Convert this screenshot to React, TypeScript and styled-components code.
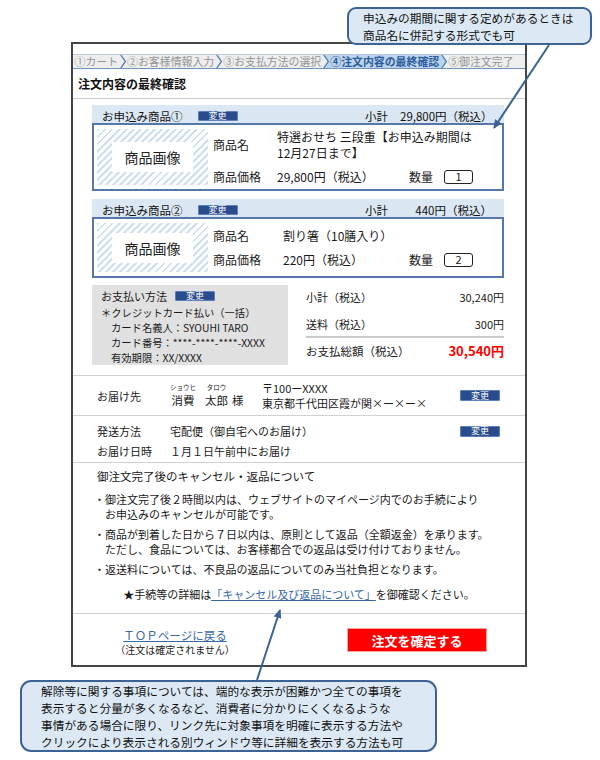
import React from 'react';
import styled, { createGlobalStyle } from 'styled-components';

const GlobalStyle = createGlobalStyle`
  html, body {
    margin: 0;
    padding: 0;
    background: #fff;
  }
  body {
    font-family: "Noto Sans CJK JP", "Noto Sans", sans-serif;
    color: #1a1a1a;
  }
  * {
    box-sizing: border-box;
  }
`;

interface Step {
    label: string,
    active?: boolean
}

const steps: Step[] = [
    { label: '①カート' },
    { label: '②お客様情報入力' },
    { label: '③お支払方法の選択' },
    { label: '④注文内容の最終確認', active: true },
    { label: '⑤御注文完了' }
];

interface Product {
    no: string,
    subtotal: string,
    name: React.ReactNode,
    price: string,
    qty: string,
    indent: number
}

const products: Product[] = [
    {
        no: '①',
        subtotal: '29,800円（税込）',
        name: <>特選おせち 三段重【お申込み期間は<br />12月27日まで】</>,
        price: '29,800円（税込）',
        qty: '1',
        indent: 64
    },
    {
        no: '②',
        subtotal: '440円（税込）',
        name: '割り箸（10膳入り）',
        price: '220円（税込）',
        qty: '2',
        indent: 70
    }
];

const STEP_BG = '#eeeeee';
const STEP_ACTIVE = '#bdd4ed';

const Chevron = ({ prev, next }: { prev?: boolean, next?: boolean }) => (
    <ChevronSvg viewBox="0 0 6 13" preserveAspectRatio="none">
        <polygon points="0,0 0.8,0 5.3,6.5 0.8,13 0,13" fill={prev ? STEP_ACTIVE : STEP_BG} />
        <polygon points="0.8,0 6,0 6,13 0.8,13 5.3,6.5" fill={next ? STEP_ACTIVE : STEP_BG} />
        <polyline points="0.8,0 5.3,6.5 0.8,13" fill="none" stroke="#4d7ab4" strokeWidth="1.3" />
    </ChevronSvg>
);

const App = () => {
    return (
        <Page>
            <GlobalStyle />
            <Frame>
                <Stepper>
                    {steps.map((s, i) => (
                        <React.Fragment key={s.label}>
                            {i > 0 && <Chevron prev={steps[i - 1].active} next={s.active} />}
                            <StepItem $active={s.active} $grow={i === steps.length - 1}>{s.label}</StepItem>
                        </React.Fragment>
                    ))}
                </Stepper>
                <PageTitle>注文内容の最終確認</PageTitle>

                <OrderArea>
                    {products.map((p) => (
                        <ProductBlock key={p.no}>
                            <ProductHeader>
                                <span>お申込み商品{p.no}</span>
                                <ChangeButton type="button">変更</ChangeButton>
                                <span />
                                <span>小計</span>
                                <Amount>{p.subtotal}</Amount>
                            </ProductHeader>
                            <ProductBox>
                                <ImageSlot>
                                    <ImageLabel>商品画像</ImageLabel>
                                </ImageSlot>
                                <Details>
                                    <DetailRow $indent={p.indent}>
                                        <span>商品名</span>
                                        <span>{p.name}</span>
                                    </DetailRow>
                                    <DetailRow $indent={p.indent}>
                                        <span>商品価格</span>
                                        <span>{p.price}</span>
                                        <span>数量</span>
                                        <QtyBox>{p.qty}</QtyBox>
                                    </DetailRow>
                                </Details>
                            </ProductBox>
                        </ProductBlock>
                    ))}

                    <PaymentRow>
                        <PaymentBox>
                            <PaymentTitle>
                                お支払い方法
                                <ChangeButton type="button">変更</ChangeButton>
                            </PaymentTitle>
                            <PaymentLine>＊クレジットカード払い（一括）</PaymentLine>
                            <PaymentLine $sub>カード名義人：SYOUHI TARO</PaymentLine>
                            <PaymentLine $sub>カード番号：****-****-****-XXXX</PaymentLine>
                            <PaymentLine $sub>有効期限：XX/XXXX</PaymentLine>
                        </PaymentBox>
                        <Summary>
                            <SumRow $top={5}>
                                <span>小計（税込）</span>
                                <span>30,240円</span>
                            </SumRow>
                            <SumRow $top={13} $rule>
                                <span>送料（税込）</span>
                                <span>300円</span>
                            </SumRow>
                            <SumRow $top={6} $total>
                                <span>お支払総額（税込）</span>
                                <TotalPrice>30,540円</TotalPrice>
                            </SumRow>
                        </Summary>
                    </PaymentRow>
                </OrderArea>

                <DeliverySection>
                    <span>お届け先</span>
                    <NameBlock>
                        <Furigana>
                            <Kana>ショウヒ</Kana>
                            <Kanji>消費</Kanji>
                        </Furigana>
                        <Furigana $gap={9}>
                            <Kana>タロウ</Kana>
                            <Kanji>太郎</Kanji>
                        </Furigana>
                        <Kanji $gap={4}>様</Kanji>
                    </NameBlock>
                    <Address>
                        〒100ーXXXX<br />
                        東京都千代田区霞が関×ー×ー×
                    </Address>
                    <ChangeButton type="button" $tall>変更</ChangeButton>
                </DeliverySection>

                <ShippingSection>
                    <span>発送方法</span>
                    <span>宅配便（御自宅へのお届け）</span>
                    <ChangeButton type="button" $tall>変更</ChangeButton>
                    <span>お届け日時</span>
                    <span>１月１日午前中にお届け</span>
                </ShippingSection>

                <CancelSection>
                    <CancelTitle>御注文完了後のキャンセル・返品について</CancelTitle>
                    <NoteList>
                        <Note>
                            <Bullet>・</Bullet>
                            <span>御注文完了後２時間以内は、ウェブサイトのマイページ内でのお手続により<br />お申込みのキャンセルが可能です。</span>
                        </Note>
                        <Note>
                            <Bullet>・</Bullet>
                            <span>商品が到着した日から７日以内は、原則として返品（全額返金）を承ります。<br />ただし、食品については、お客様都合での返品は受け付けておりません。</span>
                        </Note>
                        <Note>
                            <Bullet>・</Bullet>
                            <span>返送料については、不良品の返品についてのみ当社負担となります。</span>
                        </Note>
                    </NoteList>
                    <StarLine>
                        ★手続等の詳細は<TextLink href="#">「キャンセル及び返品について」</TextLink>を御確認ください。
                    </StarLine>
                </CancelSection>

                <ActionSection>
                    <BackBlock>
                        <TopLink href="#">ＴＯＰページに戻る</TopLink>
                        <BackNote>（注文は確定されません）</BackNote>
                    </BackBlock>
                    <ConfirmButton type="button">注文を確定する</ConfirmButton>
                </ActionSection>
            </Frame>

            <BottomCallout>
                解除等に関する事項については、端的な表示が困難かつ全ての事項を<br />
                表示すると分量が多くなるなど、消費者に分かりにくくなるような<br />
                事情がある場合に限り、リンク先に対象事項を明確に表示する方法や<br />
                クリックにより表示される別ウィンドウ等に詳細を表示する方法も可
            </BottomCallout>

            <TopCallout>
                申込みの期間に関する定めがあるときは<br />
                商品名に併記する形式でも可
            </TopCallout>

            <Arrows viewBox="0 0 600 760">
                <defs>
                    <marker id="head" markerWidth="9" markerHeight="8" refX="8" refY="4" orient="auto" markerUnits="userSpaceOnUse">
                        <path d="M0,0 L9,4 L0,8 z" fill="#3b6394" />
                    </marker>
                </defs>
                <line x1="549" y1="45" x2="494" y2="128" stroke="#3b6394" strokeWidth="2" markerEnd="url(#head)" />
                <line x1="257" y1="680" x2="280" y2="610" stroke="#3b6394" strokeWidth="2" markerEnd="url(#head)" />
            </Arrows>
        </Page>
    );
};

export default App;

const Page = styled.div`
    position: relative;
    width: 600px;
    height: 760px;
    padding-top: 42px;
    overflow: hidden;
    background: #fff;
`;

const Frame = styled.div`
    margin-left: 71px;
    width: 456px;
    border: 2px solid #454545;
    background: #fff;
    font-size: 11px;
    line-height: 14px;
`;

const Stepper = styled.div`
    display: flex;
    height: 15px;
    margin-top: 10px;
    background: ${STEP_BG};
    border-top: 1px solid #b9c9dc;
    border-bottom: 1px solid #7094c0;
    overflow: hidden;
`;

const StepItem = styled.span<{ $active?: boolean, $grow?: boolean }>`
    flex: ${p => p.$grow ? 1 : 'none'};
    padding: 0 1.5px;
    font-size: 10.9px;
    line-height: 13px;
    white-space: nowrap;
    color: ${p => p.$active ? '#2c5d9c' : '#959595'};
    font-weight: ${p => p.$active ? 700 : 400};
    background: ${p => p.$active ? STEP_ACTIVE : 'transparent'};
`;

const ChevronSvg = styled.svg`
    display: block;
    flex: none;
    width: 6px;
    height: 13px;
`;

const PageTitle = styled.div`
    height: 30px;
    padding-left: 5px;
    border-bottom: 1px solid #c8c8c8;
    font-size: 12px;
    font-weight: 700;
    line-height: 29px;
    color: #111;
`;

const OrderArea = styled.div`
    display: flex;
    flex-direction: column;
    gap: 8px;
    padding: 6px 21px 10px 19px;
`;

const ProductBlock = styled.div`
    display: flex;
    flex-direction: column;
`;

const ProductHeader = styled.div`
    display: grid;
    grid-template-columns: auto 40px 1fr 35px 92px;
    align-items: center;
    height: 18px;
    padding: 3px 12px 0 10px;
    background: #dbe7f2;
    font-size: 11.5px;
    line-height: 14px;
    color: #111;

    & > button {
        margin-left: 15px;
    }
`;

const Amount = styled.span`
    text-align: right;
`;

const ChangeButton = styled.button<{ $tall?: boolean }>`
    width: 40px;
    height: ${p => p.$tall ? 11 : 10}px;
    padding: 0;
    border: 1px solid #5d7fb8;
    border-radius: 1px;
    background: #2b4c8c;
    color: #fff;
    font-family: inherit;
    font-size: 9px;
    line-height: 8px;
    cursor: pointer;
`;

const ProductBox = styled.div`
    display: flex;
    padding: 4px 3px;
    border: 2px solid #5677a9;
    background: #fff;
`;

const ImageSlot = styled.div`
    flex: none;
    width: 111px;
    min-height: 49px;
    display: flex;
    align-items: center;
    justify-content: center;
    background: repeating-linear-gradient(135deg, #cddff1 0 2px, #fff 2px 5px);
`;

const ImageLabel = styled.div`
    width: 81px;
    height: 30px;
    background: #fff;
    font-size: 14px;
    line-height: 30px;
    text-align: center;
    color: #222;
`;

const Details = styled.div`
    flex: 1;
    display: flex;
    flex-direction: column;
    justify-content: center;
    gap: 8px;
    padding-left: 5px;
`;

const DetailRow = styled.div<{ $indent: number }>`
    display: grid;
    grid-template-columns: ${p => p.$indent}px 1fr auto auto;
    align-items: center;
    font-size: 12px;
    line-height: 16px;
    color: #1a1a1a;
`;

const QtyBox = styled.span`
    width: 29px;
    height: 14px;
    margin: 0 26px 0 11px;
    border: 1.5px solid #222;
    border-radius: 3px;
    font-size: 11px;
    line-height: 11px;
    text-align: center;
`;

const PaymentRow = styled.div`
    display: flex;
    gap: 18px;
    margin-top: -1px;
`;

const PaymentBox = styled.div`
    width: 196px;
    height: 80px;
    padding: 4px 0 0 9px;
    background: #e1e1e1;
    color: #1a1a1a;
`;

const PaymentTitle = styled.div`
    display: flex;
    align-items: center;
    gap: 8px;
    height: 14px;
    margin-bottom: 2px;
    font-size: 11px;
`;

const PaymentLine = styled.div<{ $sub?: boolean }>`
    padding-left: ${p => p.$sub ? 10 : 0}px;
    font-size: 10.3px;
    line-height: 15px;
    white-space: nowrap;
`;

const Summary = styled.div`
    flex: 1;
    display: flex;
    flex-direction: column;
`;

const SumRow = styled.div<{ $top: number, $rule?: boolean, $total?: boolean }>`
    display: flex;
    justify-content: space-between;
    align-items: center;
    margin-top: ${p => p.$top}px;
    padding-bottom: ${p => p.$rule ? 5 : 0}px;
    border-bottom: ${p => p.$rule ? '2px solid #cacaca' : 'none'};
    font-size: ${p => p.$total ? 11.5 : 11}px;
    line-height: 14px;
`;

const TotalPrice = styled.span`
    color: #ff0000;
    font-size: 13px;
    font-weight: 700;
`;

const DeliverySection = styled.div`
    display: grid;
    grid-template-columns: 73px 92px 1fr auto;
    align-items: center;
    height: 40px;
    padding: 0 25px 0 24px;
    border-top: 1px solid #d2d2d2;
`;

const NameBlock = styled.span`
    display: flex;
    align-items: flex-end;
`;

const Furigana = styled.span<{ $gap?: number }>`
    display: flex;
    flex-direction: column;
    align-items: center;
    margin-left: ${p => p.$gap || 0}px;
`;

const Kana = styled.span`
    font-size: 6.5px;
    line-height: 9px;
    white-space: nowrap;
`;

const Kanji = styled.span<{ $gap?: number }>`
    margin-left: ${p => p.$gap || 0}px;
    font-size: 11.5px;
    line-height: 16px;
`;

const Address = styled.span`
    line-height: 15px;
`;

const ShippingSection = styled.div`
    display: grid;
    grid-template-columns: 73px 1fr auto;
    grid-auto-rows: 14px;
    align-items: center;
    row-gap: 6px;
    height: 47px;
    padding: 8px 25px 0 24px;
    border-top: 1px solid #d2d2d2;
`;

const CancelSection = styled.div`
    height: 151px;
    padding: 6px 0 0 0;
    border-top: 1px solid #d2d2d2;
`;

const CancelTitle = styled.div`
    padding-left: 24px;
    font-size: 11.5px;
    line-height: 14px;
`;

const NoteList = styled.div`
    display: flex;
    flex-direction: column;
    gap: 5px;
    margin-top: 9px;
    padding-left: 21px;
`;

const Note = styled.div`
    display: flex;
    line-height: 15px;
`;

const Bullet = styled.span`
    flex: none;
    width: 11px;
`;

const StarLine = styled.div`
    margin-top: 10px;
    text-align: center;
    line-height: 15px;
`;

const TextLink = styled.a`
    color: #3867a6;
    text-decoration: underline;
`;

const ActionSection = styled.div`
    display: flex;
    align-items: center;
    height: 52px;
    border-top: 1px solid #d2d2d2;
`;

const BackBlock = styled.div`
    display: flex;
    flex-direction: column;
    align-items: center;
    width: 204px;
    padding-top: 5px;
`;

const TopLink = styled.a`
    color: #3a69a6;
    font-size: 11.5px;
    line-height: 15px;
    text-decoration: underline;
`;

const BackNote = styled.span`
    font-size: 10px;
    line-height: 14px;
    color: #222;
`;

const ConfirmButton = styled.button`
    width: 140px;
    height: 24px;
    margin-left: 70px;
    margin-top: 1px;
    padding: 0;
    border: 1px solid #f3a3a3;
    background: #ff0000;
    color: #fff;
    font-family: inherit;
    font-size: 13px;
    font-weight: 700;
    cursor: pointer;
`;

const Callout = styled.div`
    border: 2px solid #3d6394;
    border-radius: 9px;
    background: #dce9f5;
    color: #111;
    font-size: 11.7px;
    line-height: 17px;
    white-space: nowrap;
`;

const TopCallout = styled(Callout)`
    position: absolute;
    left: 347px;
    top: 7px;
    width: 245px;
    height: 38px;
    padding: 0 0 0 14px;
`;

const BottomCallout = styled(Callout)`
    width: 417px;
    height: 72px;
    margin: 13px 0 0 20px;
    padding: 0 0 0 19px;
    border-radius: 11px;
`;

const Arrows = styled.svg`
    position: absolute;
    left: 0;
    top: 0;
    width: 600px;
    height: 760px;
    pointer-events: none;
`;
